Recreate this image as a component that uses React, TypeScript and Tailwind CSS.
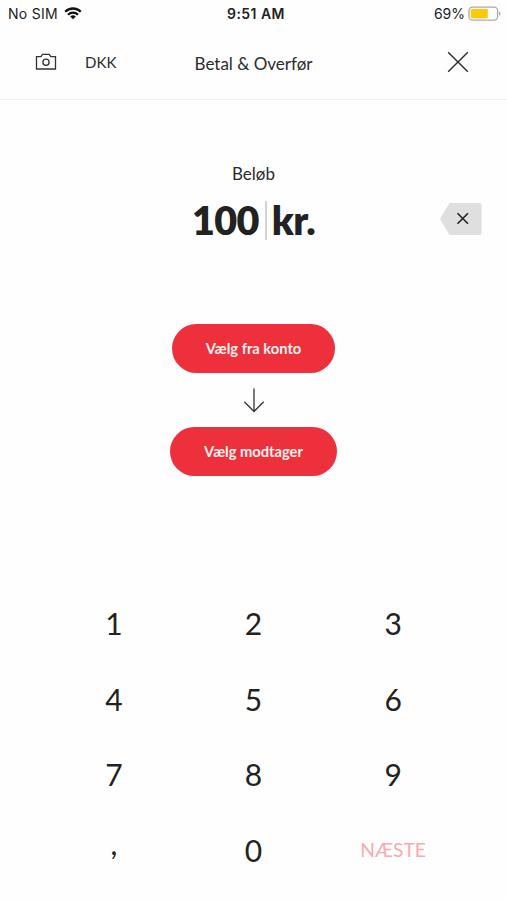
import React, { useState } from 'react';

const KEYS = ['1', '2', '3', '4', '5', '6', '7', '8', '9', ',', '0'];

const WifiIcon: React.FC = () => (
    <svg width="18" height="13" viewBox="0 0 18 13" fill="none" stroke="#111" strokeWidth="2.3">
        <path d="M1.2 4.7a11.1 11.1 0 0 1 15.6 0" />
        <path d="M4 7.7a7.1 7.1 0 0 1 10 0" />
        <path d="M9 12.3 6.2 9.6a4 4 0 0 1 5.6 0Z" fill="#111" stroke="none" />
    </svg>
);

const BatteryIcon: React.FC = () => (
    <svg width="34" height="16" viewBox="0 0 34 16" fill="none">
        <rect x="1" y="1.1" width="28.6" height="13" rx="3.5" stroke="#a9a9ad" strokeWidth="1.3" />
        <rect x="2.8" y="2.9" width="17" height="9.4" rx="1.2" fill="#fdc70c" />
        <path d="M31 5.4c2 .8 2 3.6 0 4.4Z" fill="#a9a9ad" />
    </svg>
);

const CameraIcon: React.FC = () => (
    <svg width="22" height="18" viewBox="0 0 22 18" fill="none" stroke="#333" strokeWidth="1.3">
        <path d="M1.5 3.6H6L7.4 1.4H14.2L15.8 3.6H20.5V16H1.5Z" />
        <circle cx="11" cy="9.2" r="3.1" />
    </svg>
);

const App: React.FC = () => {
    const [amount, setAmount] = useState('100');

    const handleKey = (key: string) => {
        if (key === ',' && amount.includes(',')) {
            return;
        }
        setAmount(amount + key);
    };

    return (
        <div className="flex h-[900px] w-[507px] flex-col bg-[#fefefe] font-['Lato',sans-serif] text-[#2b2b2b]">
            <div className="grid h-7 grid-cols-3 items-center pr-[5px] pb-px pl-[8px] font-['Inter',sans-serif] text-[14px] text-[#222]">
                <div className="flex items-center gap-[6px]">
                    <span className="tracking-[0.3px]">No SIM</span>
                    <WifiIcon />
                </div>
                <div className="pl-[2px] text-center font-semibold tracking-[0.45px]">9:51 AM</div>
                <div className="flex items-center justify-end gap-[3px]">
                    <span>69%</span>
                    <BatteryIcon />
                </div>
            </div>

            <header className="grid h-[72px] shrink-0 grid-cols-3 items-center border-b border-[#efefef] pb-px">
                <div className="flex items-center gap-7 pb-[2px] pl-[35px]">
                    <CameraIcon />
                    <span className="text-[15px] tracking-[0.1px]">DKK</span>
                </div>
                <h1 className="pt-px text-center text-[17px]">Betal &amp; Overfør</h1>
                <button type="button" className="mr-[38px] mb-[2px] justify-self-end" aria-label="Luk">
                    <svg width="22" height="22" viewBox="0 0 22 22" stroke="#2b2b2b" strokeWidth="1.4">
                        <path d="M1.2 1.2 20.8 20.8M20.8 1.2 1.2 20.8" />
                    </svg>
                </button>
            </header>

            <main className="flex h-[486px] flex-col items-center pt-[62px]">
                <div className="text-[17px] leading-6">Beløb</div>
                <div className="grid h-[50px] w-full grid-cols-[1fr_auto_1fr] items-center pt-[12px]">
                    <div className="col-start-2 flex items-center gap-[6px] pt-[2px] text-[39.5px] leading-10 font-extrabold text-[#222]">
                        <span className="tracking-[-0.6px]">{amount}</span>
                        <span className="h-[39px] w-[2px] bg-[#d2d2d2]" />
                        <span className="-ml-px tracking-[-0.6px]">kr.</span>
                    </div>
                    <button type="button" className="mr-[25px] justify-self-end" aria-label="Slet" onClick={() => setAmount(amount.slice(0, -1))}>
                        <svg width="42" height="32" viewBox="0 0 42 32" fill="none">
                            <path d="M10.5 0H39.5Q41.5 0 41.5 2V30Q41.5 32 39.5 32H10.5Q9.5 32 9 31L0.5 17Q0 16 0.5 15L9 1Q9.5 0 10.5 0Z" fill="#dfdfdf" />
                            <path d="M17.5 10.3 28 20.8M28 10.3 17.5 20.8" stroke="#222" strokeWidth="1.6" />
                        </svg>
                    </button>
                </div>

                <button type="button" className="mt-[88px] h-[49px] w-[163px] shrink-0 rounded-full bg-[#ee303c] text-[14.7px] font-bold text-[#fff0ee]">
                    Vælg fra konto
                </button>
                <svg className="mt-[15px] mb-[14px] shrink-0" width="22" height="25" viewBox="0 0 22 25" fill="none" stroke="#333" strokeWidth="1.3">
                    <path d="M11 .5V23.5M1.3 13.7 11 23.5 20.7 13.7" />
                </svg>
                <button type="button" className="h-[49px] w-[167px] shrink-0 rounded-full bg-[#ee303c] text-[14.7px] font-bold text-[#fff0ee]">
                    Vælg modtager
                </button>
            </main>

            <div className="grid grid-cols-3 auto-rows-[75.6px] px-[44px] text-[30px] text-[#222]">
                {KEYS.map((key) => (
                    <button key={key} type="button" className={key === ',' ? 'pb-[14px]' : ''} onClick={() => handleKey(key)}>
                        {key}
                    </button>
                ))}
                <button type="button" className="pb-px text-[19.3px] text-[#f9a9b0]">NÆSTE</button>
            </div>
        </div>
    );
};

export default App;
